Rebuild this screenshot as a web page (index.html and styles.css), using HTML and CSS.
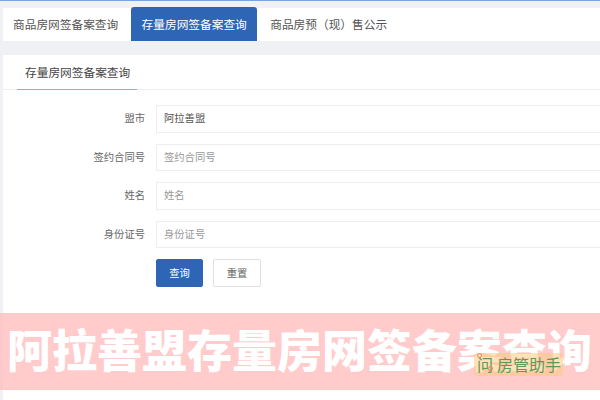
FILE: index.html
```html
<!DOCTYPE html>
<html>
    <head>
        <meta charset="UTF-8"/>
        <link rel="stylesheet" href="styles.css">
    </head>
    <body>
        <div class="TopLine"></div>
        <ul class="Tabs">
            <li>商品房网签备案查询</li>
            <li class="Active">存量房网签备案查询</li>
            <li>商品房预（现）售公示</li>
        </ul>
        <div class="Panel">
            <div class="PanelHead"><span>存量房网签备案查询</span></div>
            <form class="Form">
                <label>盟市</label>
                <div class="Input Value">阿拉善盟</div>
                <label>签约合同号</label>
                <div class="Input">签约合同号</div>
                <label>姓名</label>
                <div class="Input">姓名</div>
                <label>身份证号</label>
                <div class="Input">身份证号</div>
                <div class="Buttons">
                    <button type="button" class="Primary">查询</button>
                    <button type="button">重置</button>
                </div>
            </form>
        </div>
        <div class="Banner">阿拉善盟存量房网签备案查询</div>
        <div class="Mark">
            <span class="MarkFirst">问<i class="Dot One"></i><i class="Dot Two"></i></span>房管助手
        </div>
    </body>
</html>
```

FILE: styles.css
```css
html, body
{
    height:100%;
}
body
{
    position:relative;
    margin:0;
    overflow:hidden;
    padding-left:3px;
    box-sizing:border-box;
    background:#f0f1f5;
    font-family:"Noto Sans CJK SC", "Liberation Sans", sans-serif;
    font-size:11.7px;
    color:#555;
}
.TopLine
{
    height:1px;
    margin-left:-3px;
    background:#7ba3dc;
}
.Tabs
{
    display:flex;
    height:33px;
    margin:7px 0 14px 0;
    padding:0;
    list-style:none;
    background:#fff;
}
.Tabs li
{
    padding:0 13px 0 10px;
    line-height:32px;
    white-space:nowrap;
}
.Tabs li:nth-child(3)
{
    padding-left:13px;
}
.Tabs .Active
{
    width:126px;
    box-sizing:border-box;
    height:34px;
    margin-top:-1px;
    padding:0 10px;
    line-height:34px;
    border-radius:3px 3px 0 0;
    background:#2e66b5;
    color:#fff;
    text-align:center;
}
.Panel
{
    height:345px;
    background:#fff;
}
.PanelHead
{
    height:34px;
    margin-bottom:15px;
    padding-left:14px;
    border-bottom:1px solid #eee;
}
.PanelHead span
{
    display:inline-block;
    box-sizing:border-box;
    width:120px;
    height:35px;
    padding-left:8px;
    line-height:34px;
    border-bottom:1px solid #8fabd6;
    color:#444;
}
.Form
{
    display:grid;
    grid-template-columns:142px 1fr;
    column-gap:11px;
    row-gap:11px;
    align-items:center;
    font-size:10.3px;
}
.Form label
{
    padding-bottom:2px;
    text-align:right;
    color:#666;
}
.Input
{
    box-sizing:border-box;
    height:27.5px;
    padding-left:7px;
    line-height:24px;
    border:1px solid #eeeeee;
    border-right:none;
    color:#999;
}
.Input.Value
{
    color:#555;
}
.Buttons
{
    grid-column:2;
    display:flex;
    gap:10px;
}
button
{
    width:48px;
    height:28px;
    padding:0 0 1px 0;
    border:1px solid #e0e0e0;
    border-radius:2px;
    background:#fff;
    color:#666;
    font:inherit;
}
button.Primary
{
    width:47px;
    border-color:#2e66b5;
    background:#2e66b5;
    color:#fff;
}
.Banner
{
    position:absolute;
    left:0;
    right:0;
    top:313px;
    height:77px;
    padding-left:7px;
    background:rgba(255,190,190,0.8);
    color:#fff;
    font-size:45px;
    font-weight:900;
    line-height:72px;
    white-space:nowrap;
}
.Mark
{
    position:absolute;
    left:474px;
    top:353px;
    width:89px;
    height:23px;
    box-sizing:border-box;
    padding-left:3px;
    border-radius:4px;
    background:rgba(255,200,130,0.55);
    color:#5d9a5a;
    font-size:16px;
    line-height:22px;
    white-space:nowrap;
}
.MarkFirst
{
    position:relative;
    margin-right:4px;
}
.Dot
{
    position:absolute;
    width:3px;
    height:3px;
    border:1px solid #f0805a;
    border-radius:50%;
}
.Dot.One
{
    left:0;
    top:1px;
}
.Dot.Two
{
    left:11px;
    top:14px;
}
```
